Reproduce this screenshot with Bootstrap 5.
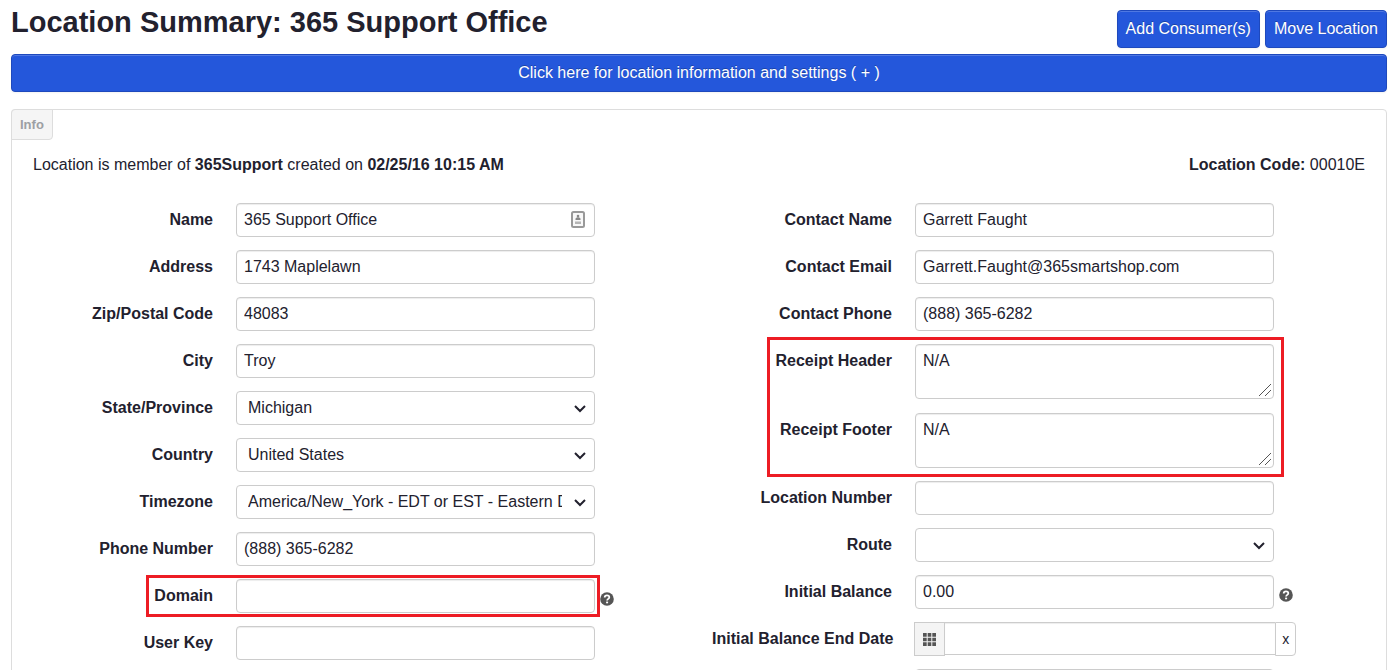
<!DOCTYPE html>
<html lang="en">
<head>
<meta charset="utf-8">
<meta name="viewport" content="width=device-width, initial-scale=1">
<title>Location Summary</title>
<link href="https://cdn.jsdelivr.net/npm/bootstrap@5.3.0/dist/css/bootstrap.min.css" rel="stylesheet">
<style>
  body { font-family: "Liberation Sans", Arial, sans-serif; font-size: 16px; line-height: 20px; color: #22212e; background: #fff; padding: 10px 3px 0 11px; }
  h1 { font-size: 29px; line-height: 38px; font-weight: 700; margin-top: -7px; }
  .btn-brand { --bs-btn-color: #fff; --bs-btn-bg: #2457db; --bs-btn-border-color: #1e49bd; --bs-btn-hover-color: #fff; --bs-btn-hover-bg: #1e4bc4; --bs-btn-hover-border-color: #1a40a6;
    height: 38px; padding: 0 8px; font-size: 16px; line-height: 34px; border-radius: 4px; box-shadow: inset 0 1px 0 rgba(255,255,255,.2), 0 1px 2px rgba(0,0,0,.05); text-shadow: 0 -1px 0 rgba(0,0,0,.25); }
  .panel { margin-top: 17px; border: 1px solid #ddd; border-radius: 4px; padding: 0 21px 40px; }
  .panel-tab { margin-left: -22px; margin-top: -1px; padding: 0 8px; height: 31px; line-height: 29px; font-size: 13px; font-weight: 700; color: #9da0a4; background: #f5f5f5; border: 1px solid #ddd; border-radius: 4px 0 4px 0; }
  .summary { margin-top: 15px; margin-bottom: 28px; }
  .fields { display: grid; grid-template-columns: 1fr 1fr; column-gap: 26px; align-items: start; }
  .stack { display: flex; flex-direction: column; gap: 13px; }
  .field-row { display: flex; align-items: flex-start; position: relative; }
  .field-row > label { flex: 0 0 180px; min-width: 0; margin-right: 23px; text-align: right; font-weight: 700; line-height: 20px; padding-top: 7px; white-space: nowrap; }
  .ctl { flex: 0 0 55%; width: 55%; min-width: 0; position: relative; }
  .form-control, .form-select { height: 34px; font-size: 16px; line-height: 20px; color: #22212e; border: 1px solid #ccc; border-radius: 4px; }
  .form-control { padding: 6px 7px; box-shadow: inset 0 1px 1px rgba(0,0,0,.075); }
  textarea.form-control { height: 55px; min-height: 55px; }
  textarea::-webkit-resizer { background: url("data:image/svg+xml,%3csvg xmlns='http://www.w3.org/2000/svg' width='15' height='15'%3e%3cpath d='M1 13L13 1M7 13l6-6' stroke='%23555'/%3e%3c/svg%3e") no-repeat right bottom; }
  .form-select { padding: 5px 32px 5px 11px; background-position: right 7px center; background-size: 14px 14px;
    background-image: url("data:image/svg+xml,%3csvg xmlns='http://www.w3.org/2000/svg' viewBox='0 0 14 14'%3e%3cpath d='M2 5l5 5 5-5' fill='none' stroke='%2322212e' stroke-width='2'/%3e%3c/svg%3e"); }
  .card-icon { position: absolute; right: 10px; top: 8px; }
  .help { padding: 0; border: 0; background: none; margin: 13px 0 0 5px; line-height: 0; }
  .receipts { position: relative; gap: 14px; }
  .marked-domain::after, .receipts::after { content: ""; position: absolute; border: 3px solid #ed1c24; pointer-events: none; }
  .marked-domain::after { left: 113px; width: calc(55% + 95px); top: -4px; bottom: -4px; }
  .receipts::after { left: 55px; width: calc(55% + 158px); top: -7px; bottom: -9px; }
  .date-group { display: flex; flex: 0 0 calc(55% + 23px); margin-left: -1px; }
  .date-group .form-control { border-radius: 0; border-left: 0; border-right: 0; flex: 1; min-width: 0; height: 33px; }
  .date-group button { height: 34px; border: 1px solid #ccc; padding: 0; }
  .grid-btn { width: 31px; background: #f4f4f4; }
  .clear-btn { width: 21px; background: #fff; border-radius: 0 4px 4px 0; font-size: 14px; color: #22212e; }
</style>
</head>
<body class="vh-100 overflow-hidden">
<header class="d-flex justify-content-between align-items-start">
  <h1 class="mb-0">Location Summary: 365 Support Office</h1>
  <div class="d-flex" style="gap:5px">
    <button type="button" class="btn btn-brand">Add Consumer(s)</button>
    <button type="button" class="btn btn-brand">Move Location</button>
  </div>
</header>
<main>
  <button type="button" class="btn btn-brand w-100" style="margin-top:6px">Click here for location information and settings ( + )</button>
  <section class="panel">
    <div class="panel-tab d-inline-block align-top">Info</div>
    <div class="summary d-flex justify-content-between">
      <div>Location is member of <strong>365Support</strong> created on <strong>02/25/16 10:15 AM</strong></div>
      <div><strong>Location Code:</strong> 00010E</div>
    </div>
    <form class="fields">
      <div class="stack">
        <div class="field-row"><label for="name">Name</label><div class="ctl"><input id="name" class="form-control" value="365 Support Office">
          <svg class="card-icon" width="14" height="17" viewBox="0 0 14 17" aria-hidden="true"><rect x="1" y="1" width="12" height="15" rx="1.5" fill="#f8f8f8" stroke="#999" stroke-width="2"/><circle cx="7" cy="5" r="1.3" fill="#888"/><path d="M4.5 9V7.500L6 6.300h2l1.500 1.200V9z" fill="#888"/><path d="M4 10.500h6v2.500H4z" fill="#b5b5b5"/></svg></div></div>
        <div class="field-row"><label for="address">Address</label><div class="ctl"><input id="address" class="form-control" value="1743 Maplelawn"></div></div>
        <div class="field-row"><label for="zip">Zip/Postal Code</label><div class="ctl"><input id="zip" class="form-control" value="48083"></div></div>
        <div class="field-row"><label for="city">City</label><div class="ctl"><input id="city" class="form-control" value="Troy"></div></div>
        <div class="field-row"><label for="state">State/Province</label><div class="ctl"><select id="state" class="form-select"><option>Michigan</option></select></div></div>
        <div class="field-row"><label for="country">Country</label><div class="ctl"><select id="country" class="form-select"><option>United States</option></select></div></div>
        <div class="field-row"><label for="tz">Timezone</label><div class="ctl"><select id="tz" class="form-select"><option>America/New_York - EDT or EST - Eastern Daylight Time</option></select></div></div>
        <div class="field-row"><label for="phone">Phone Number</label><div class="ctl"><input id="phone" class="form-control" value="(888) 365-6282"></div></div>
        <div class="field-row marked-domain"><label for="domain">Domain</label><div class="ctl"><input id="domain" class="form-control"></div>
          <button type="button" class="help" aria-label="Help"><svg width="14" height="14" viewBox="0 0 14 14"><circle cx="7" cy="7" r="6.800" fill="#555"/><path d="M4.700 5.500C4.700 2.700 9.300 2.700 9.300 5.300C9.300 6.900 7.100 6.900 7.100 8.600" fill="none" stroke="#fff" stroke-width="1.800"/><path d="M6.100 9.600h2v1.700h-2z" fill="#fff"/></svg></button></div>
        <div class="field-row"><label for="userkey">User Key</label><div class="ctl"><input id="userkey" class="form-control"></div></div>
      </div>
      <div class="stack">
        <div class="field-row"><label for="cname">Contact Name</label><div class="ctl"><input id="cname" class="form-control" value="Garrett Faught"></div></div>
        <div class="field-row"><label for="cemail">Contact Email</label><div class="ctl"><input id="cemail" class="form-control" value="Garrett.Faught@365smartshop.com"></div></div>
        <div class="field-row"><label for="cphone">Contact Phone</label><div class="ctl"><input id="cphone" class="form-control" value="(888) 365-6282"></div></div>
        <div class="stack receipts">
          <div class="field-row"><label for="rhead">Receipt Header</label><div class="ctl"><textarea id="rhead" class="form-control d-block">N/A</textarea></div></div>
          <div class="field-row"><label for="rfoot">Receipt Footer</label><div class="ctl"><textarea id="rfoot" class="form-control d-block">N/A</textarea></div></div>
        </div>
        <div class="field-row"><label for="locnum">Location Number</label><div class="ctl"><input id="locnum" class="form-control"></div></div>
        <div class="field-row"><label for="route">Route</label><div class="ctl"><select id="route" class="form-select"><option></option></select></div></div>
        <div class="field-row"><label for="bal">Initial Balance</label><div class="ctl"><input id="bal" class="form-control" value="0.00"></div>
          <button type="button" class="help" aria-label="Help"><svg width="14" height="14" viewBox="0 0 14 14"><circle cx="7" cy="7" r="6.800" fill="#555"/><path d="M4.700 5.500C4.700 2.700 9.300 2.700 9.300 5.300C9.300 6.900 7.100 6.900 7.100 8.600" fill="none" stroke="#fff" stroke-width="1.800"/><path d="M6.100 9.600h2v1.700h-2z" fill="#fff"/></svg></button></div>
        <div class="field-row"><label for="baldate">Initial Balance End Date</label>
          <div class="date-group">
            <button type="button" class="grid-btn" aria-label="Pick a date"><svg class="d-block mx-auto" width="13" height="13" viewBox="0 0 13 13" fill="#555"><path d="M0 0h3.700v3.700H0zM4.700 0h3.600v3.700H4.700zM9.300 0H13v3.700H9.300zM0 4.700h3.700v3.600H0zM4.700 4.700h3.600v3.600H4.700zM9.300 4.700H13v3.600H9.300zM0 9.300h3.700V13H0zM4.700 9.300h3.600V13H4.700zM9.300 9.300H13V13H9.300z"/></svg></button>
            <input id="baldate" class="form-control">
            <button type="button" class="clear-btn">x</button>
          </div></div>
        <div class="field-row"><div class="ctl" style="margin-left:203px"><input class="form-control" aria-label="Additional value"></div></div>
      </div>
    </form>
  </section>
</main>
<script src="https://cdn.jsdelivr.net/npm/bootstrap@5.3.0/dist/js/bootstrap.bundle.min.js"></script>
</body>
</html>
